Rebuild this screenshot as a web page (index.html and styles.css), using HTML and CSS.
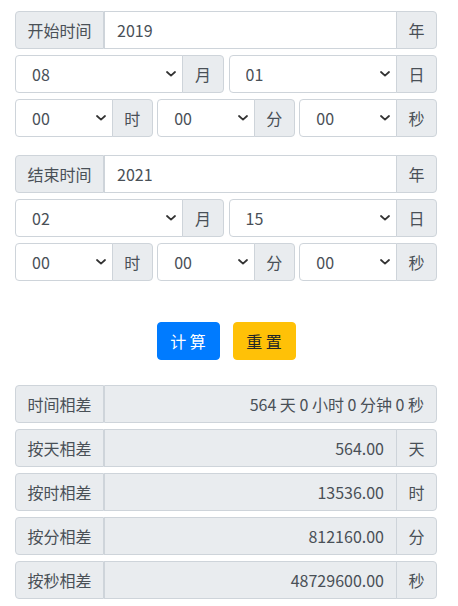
FILE: index.html
```html
<!DOCTYPE html>
<html lang="zh-CN">
<head>
<meta charset="utf-8">
<title>时间差计算</title>
<link rel="stylesheet" href="styles.css">
</head>
<body>
<div class="page">
  <div class="block">
    <div class="ig">
      <span class="addon label">开始时间</span>
      <input class="ctl" type="text" value="2019">
      <span class="addon">年</span>
    </div>
    <div class="row2">
      <div class="ig">
        <select class="ctl sel"><option>08</option></select>
        <span class="addon">月</span>
      </div>
      <div class="ig">
        <select class="ctl sel"><option>01</option></select>
        <span class="addon">日</span>
      </div>
    </div>
    <div class="row3">
      <div class="ig">
        <select class="ctl sel"><option>00</option></select>
        <span class="addon">时</span>
      </div>
      <div class="ig">
        <select class="ctl sel"><option>00</option></select>
        <span class="addon">分</span>
      </div>
      <div class="ig">
        <select class="ctl sel"><option>00</option></select>
        <span class="addon">秒</span>
      </div>
    </div>
  </div>

  <div class="block second">
    <div class="ig">
      <span class="addon label">结束时间</span>
      <input class="ctl" type="text" value="2021">
      <span class="addon">年</span>
    </div>
    <div class="row2">
      <div class="ig">
        <select class="ctl sel"><option>02</option></select>
        <span class="addon">月</span>
      </div>
      <div class="ig">
        <select class="ctl sel"><option>15</option></select>
        <span class="addon">日</span>
      </div>
    </div>
    <div class="row3">
      <div class="ig">
        <select class="ctl sel"><option>00</option></select>
        <span class="addon">时</span>
      </div>
      <div class="ig">
        <select class="ctl sel"><option>00</option></select>
        <span class="addon">分</span>
      </div>
      <div class="ig">
        <select class="ctl sel"><option>00</option></select>
        <span class="addon">秒</span>
      </div>
    </div>
  </div>

  <div class="actions">
    <button class="btn btn-blue" type="button">计 算</button>
    <button class="btn btn-yellow" type="button">重 置</button>
  </div>

  <div class="block results">
    <div class="ig">
      <span class="addon label">时间相差</span>
      <input class="ctl ro" type="text" value="564 天 0 小时 0 分钟 0 秒" readonly>
    </div>
    <div class="ig">
      <span class="addon label">按天相差</span>
      <input class="ctl ro" type="text" value="564.00" readonly>
      <span class="addon">天</span>
    </div>
    <div class="ig">
      <span class="addon label">按时相差</span>
      <input class="ctl ro" type="text" value="13536.00" readonly>
      <span class="addon">时</span>
    </div>
    <div class="ig">
      <span class="addon label">按分相差</span>
      <input class="ctl ro" type="text" value="812160.00" readonly>
      <span class="addon">分</span>
    </div>
    <div class="ig">
      <span class="addon label">按秒相差</span>
      <input class="ctl ro" type="text" value="48729600.00" readonly>
      <span class="addon">秒</span>
    </div>
  </div>
</div>
</body>
</html>
```

FILE: styles.css
```css
* { box-sizing: border-box; }

html, body {
  margin: 0;
  padding: 0;
  background: #fff;
}

body {
  font-family: "Noto Sans CJK SC", "Noto Sans", sans-serif;
  font-size: 16px;
  line-height: 1.5;
  color: #495057;
}

.page {
  padding: 11px 21px 0 15px;
}

.block {
  display: flex;
  flex-direction: column;
  gap: 6px;
}

.second {
  margin-top: 18px;
}

.row2 {
  display: grid;
  grid-template-columns: 1fr 1fr;
  column-gap: 5px;
}

.row3 {
  display: grid;
  grid-template-columns: 1fr 1fr 1fr;
  column-gap: 4.5px;
}

.ig {
  display: flex;
  align-items: stretch;
  height: 38px;
  min-width: 0;
}

.addon {
  display: flex;
  align-items: center;
  flex: none;
  padding: 6px 11.5px;
  background: #e9ecef;
  border: 1px solid #ced4da;
  color: #495057;
  font-size: 16px;
  line-height: 24px;
  white-space: nowrap;
}

.ig > * + * {
  margin-left: -1px;
}

.ig > :first-child {
  border-top-left-radius: 4px;
  border-bottom-left-radius: 4px;
}

.ig > :last-child {
  border-top-right-radius: 4px;
  border-bottom-right-radius: 4px;
}

.ctl {
  flex: 1 1 auto;
  min-width: 0;
  width: 1%;
  height: 38px;
  margin: 0;
  padding: 6px 12px;
  font-family: inherit;
  font-size: 16px;
  line-height: 24px;
  color: #495057;
  background: #fff;
  border: 1px solid #ced4da;
  border-radius: 0;
  outline: none;
}

.sel {
  -webkit-appearance: none;
  appearance: none;
  padding-left: 16px;
  padding-right: 24px;
  background-color: #fff;
  background-image: url("data:image/svg+xml,%3Csvg xmlns='http://www.w3.org/2000/svg' width='10' height='6' viewBox='0 0 10 6'%3E%3Cpath d='M1 1l4 3.6L9 1' fill='none' stroke='%23333' stroke-width='1.8' stroke-linecap='round' stroke-linejoin='round'/%3E%3C/svg%3E");
  background-repeat: no-repeat;
  background-position: right 6px center;
  background-size: 10px 6px;
}

.ro {
  background: #e9ecef;
  text-align: right;
}

.actions {
  display: flex;
  justify-content: center;
  gap: 13px;
  margin-top: 41px;
  margin-bottom: 25px;
}

.btn {
  height: 38px;
  width: 63px;
  padding: 6px 12px;
  border: 1px solid transparent;
  border-radius: 4px;
  font-family: inherit;
  font-size: 16px;
  line-height: 24px;
  cursor: pointer;
}

.btn-blue {
  background: #007bff;
  border-color: #007bff;
  color: #fff;
}

.btn-yellow {
  background: #ffc107;
  border-color: #ffc107;
  color: #212529;
}
```
